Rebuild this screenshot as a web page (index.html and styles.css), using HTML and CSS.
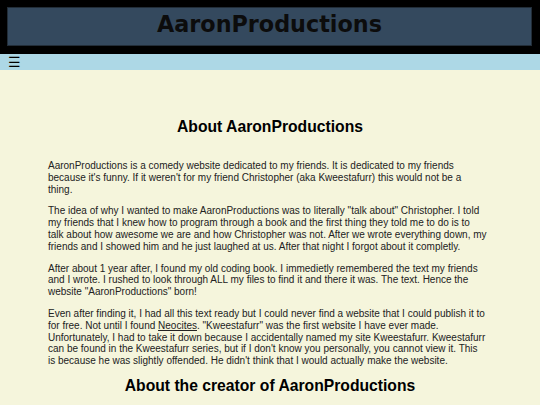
FILE: index.html
```html
<!DOCTYPE html>
<html lang="en">
<head>
<meta charset="utf-8">
<title>AaronProductions</title>
<link rel="stylesheet" href="styles.css">
</head>
<body>
<header class="site-header">
  <div class="title-box"><h1 class="site-title">AaronProductions</h1></div>
</header>
<nav class="menu-bar"><span class="menu-icon">&#9776;</span></nav>
<main class="content">
  <h2 class="section-title first">About AaronProductions</h2>
  <p>AaronProductions is a comedy website dedicated to my friends. It is dedicated to my friends because it's funny. If it weren't for my friend Christopher (aka Kweestafurr) this would not be a<br>thing.</p>
  <p>The idea of why I wanted to make AaronProductions was to literally "talk about" Christopher. I told my friends that I knew how to program through a book and the first thing they told me to do is to<br>talk about how awesome we are and how Christopher was not. After we wrote everything down, my friends and I showed him and he just laughed at us. After that night I forgot about it completly.</p>
  <p>After about 1 year after, I found my old coding book. I immedietly remembered the text my friends and I wrote. I rushed to look through ALL my files to find it and there it was. The text. Hence the website "AaronProductions" born!</p>
  <p>Even after finding it, I had all this text ready but I could never find a website that I could publish it to for free. Not until I found <a href="#">Neocites</a>. "Kweestafurr" was the first website I have ever made. Unfortunately, I had to take it down because I accidentally named my site Kweestafurr. Kweestafurr can be found in the Kweestafurr series, but if I don't know you personally, you cannot view it. This<br>is because he was slightly offended. He didn't think that I would actually make the website.</p>
  <h2 class="section-title">About the creator of AaronProductions</h2>
</main>
</body>
</html>
```
FILE: styles.css
```css
html, body {
  margin: 0;
  padding: 0;
}
body {
  background: #f5f5dc;
  font-family: "Liberation Sans", Arial, sans-serif;
  color: #222;
}
.site-header {
  background: #000;
  padding: 7px 8px 8px 7px;
}
.title-box {
  background: #34495e;
  border: 1px solid #222d38;
  height: 37px;
  box-sizing: content-box;
  display: flex;
  justify-content: center;
  align-items: flex-start;
}
.site-title {
  margin: 0;
  padding-top: 3px;
  font-family: "DejaVu Sans", Verdana, sans-serif;
  font-weight: bold;
  font-size: 22.3px;
  color: #0c0c0c;
  line-height: 26px;
}
.menu-bar {
  background: #add8e6;
  height: 16px;
  padding-left: 8px;
  display: flex;
  align-items: center;
}
.menu-icon {
  font-size: 14px;
  color: #000;
  line-height: 16px;
}
.content {
  padding: 0 48px;
  overflow: hidden;
}
.section-title {
  text-align: center;
  font-size: 15.7px;
  font-weight: bold;
  color: #000;
  margin: 0 0 12px;
}
.section-title.first {
  margin-top: 48px;
  margin-bottom: 24px;
}
.content p {
  font-size: 10px;
  line-height: 11.8px;
  margin: 10px 0;
}
.content a {
  color: #222;
  text-decoration: underline;
}
```
